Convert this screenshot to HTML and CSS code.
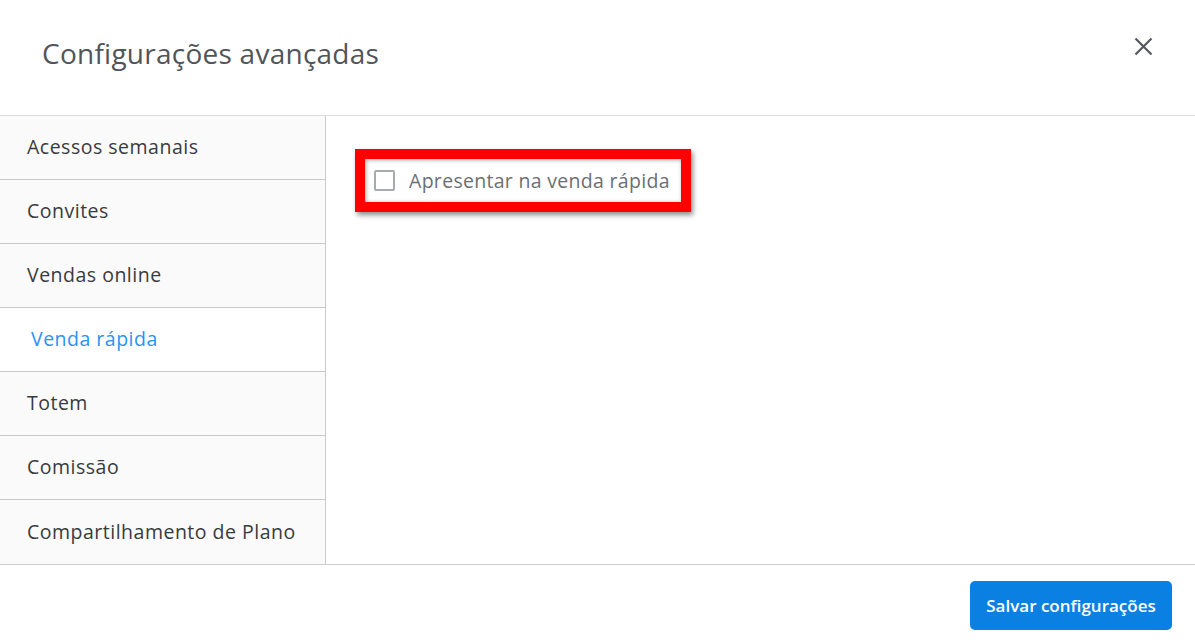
FILE: index.html
```html
<!DOCTYPE html>
<html lang="pt">
<head>
<meta charset="utf-8">
<title>Configurações avançadas</title>
<link rel="stylesheet" href="styles.css">
</head>
<body>
<div class="modal">
  <header class="modal-header">
    <h1 class="modal-title">Configurações avançadas</h1>
    <button class="close-btn" aria-label="Fechar">
      <svg width="19" height="19" viewBox="0 0 19 19"><path d="M1.5 1.5 L17.5 17.5 M17.5 1.5 L1.5 17.5" stroke="#54575b" stroke-width="2.2" stroke-linecap="butt"/></svg>
    </button>
  </header>
  <div class="modal-body">
    <nav class="side-nav">
      <div class="nav-item">Acessos semanais</div>
      <div class="nav-item">Convites</div>
      <div class="nav-item">Vendas online</div>
      <div class="nav-item active">Venda rápida</div>
      <div class="nav-item">Totem</div>
      <div class="nav-item">Comissão</div>
      <div class="nav-item">Compartilhamento de Plano</div>
    </nav>
    <section class="content">
      <label class="highlight">
        <span class="checkbox"></span>
        <span class="check-label">Apresentar na venda rápida</span>
      </label>
    </section>
  </div>
  <footer class="modal-footer">
    <button class="primary-btn">Salvar configurações</button>
  </footer>
</div>
</body>
</html>
```
FILE: styles.css
```css
* { box-sizing: border-box; }
html, body { margin: 0; padding: 0; background: #fff; }
body {
  font-family: "Open Sans", "Noto Sans", sans-serif;
  width: 1195px;
  height: 643px;
  overflow: hidden;
}
.modal { display: flex; flex-direction: column; height: 643px; }
.modal-header {
  height: 116px;
  border-bottom: 1px solid #dedede;
  display: flex;
  align-items: center;
  justify-content: space-between;
  padding: 0 42px 10px 42px;
}
.modal-title {
  margin: 0;
  font-weight: 400;
  font-size: 28px;
  color: #51555a;
  letter-spacing: 0.25px;
}
.close-btn {
  border: 0;
  background: none;
  padding: 0;
  width: 19px;
  height: 19px;
  margin-top: -12px;
  cursor: pointer;
}
.close-btn svg { display: block; }
.modal-body { display: flex; height: 449px; border-bottom: 1px solid #cfcfd3; }
.side-nav {
  width: 326px;
  border-right: 1px solid #cacaca;
  background: #fafafa;
  display: flex;
  flex-direction: column;
}
.nav-item {
  height: 64px;
  border-bottom: 1px solid #cacaca;
  padding-left: 27px;
  display: flex;
  align-items: center;
  font-size: 19.5px;
  letter-spacing: 0.5px;
  color: #383b40;
  padding-bottom: 2px;
}
.nav-item:last-child { border-bottom: 0; }
.nav-item.active { background: #fff; color: #2a93f2; padding-left: 31px; }
.content { flex: 1; padding: 33px 0 0 29px; }
.highlight {
  display: inline-flex;
  align-items: center;
  border: 10px solid #ff0000;
  width: 336px;
  height: 63px;
  padding-left: 9px;
  box-shadow: 2px 3px 5px rgba(0,0,0,0.45), inset 1px 1px 4px rgba(0,0,0,0.35);
}
.checkbox {
  width: 21px;
  height: 21px;
  border: 2px solid #a7abb0;
  border-radius: 2px;
  background: #fff;
  flex: none;
}
.check-label {
  margin-left: 14px;
  font-size: 19.5px;
  letter-spacing: 0.3px;
  color: #6b6f74;
}
.modal-footer {
  flex: 1;
  display: flex;
  align-items: center;
  justify-content: flex-end;
  padding: 2px 23px 0 0;
}
.primary-btn {
  background: #0a80e3;
  color: #fff;
  border: 0;
  border-radius: 5px;
  width: 202px;
  height: 49px;
  font-family: inherit;
  font-size: 17px;
  font-weight: 600;
}
```
